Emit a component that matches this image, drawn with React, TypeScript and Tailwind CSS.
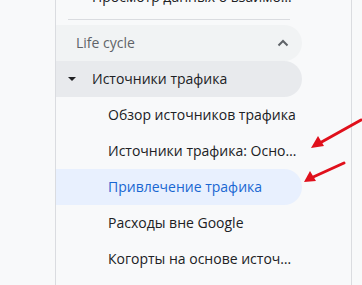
import React from 'react';

const font = { fontFamily: '"Open Sans", "Noto Sans", sans-serif' };

interface NavItemProps {
  label: string;
  active?: boolean;
}

const NavItem: React.FC<NavItemProps> = ({ label, active }) => (
  <div
    className={`flex items-center h-9 w-[246px] rounded-r-full pl-[52px] text-sm whitespace-nowrap ${
      active ? 'bg-[#e8f0fe] text-[#1967d2]' : 'text-[#202124]'
    }`}
  >
    {label}
  </div>
);

const items = [
  { label: 'Обзор источников трафика' },
  { label: 'Источники трафика: Осно…' },
  { label: 'Привлечение трафика', active: true },
  { label: 'Расходы вне Google' },
  { label: 'Когорты на основе источ…' },
];

export default function App() {
  return (
    <div className="relative w-[362px] h-[285px] overflow-hidden bg-[#f8f9fa] flex" style={font}>
      <div className="w-[55px] shrink-0" />
      <div className="w-[297px] shrink-0 border-l border-r border-[#dadce0] bg-[#f8f9fa] flex flex-col">
        {/* row cut off at the top */}
        <div className="flex items-center h-9 -mt-[21px] pl-[36px] text-sm text-[#202124] whitespace-nowrap">
          Просмотр данных о взаимо…
        </div>
        <div className="mt-[4px] mb-[5px] ml-3 w-[222px] h-px bg-[#dadce0]" />

        <div className="flex items-center justify-between h-9 w-[246px] rounded-r-full bg-[#f1f3f4] pl-5 pr-[13px] text-sm text-[#5f6368]">
          <span>Life cycle</span>
          <svg width="12" height="8" viewBox="0 0 12 8" fill="none">
            <path d="M1.5 6.5 L6 2 L10.5 6.5" stroke="#5f6368" strokeWidth="2" />
          </svg>
        </div>

        <div className="flex items-center h-9 w-[246px] rounded-r-full bg-[#e8eaed] pl-3 text-sm text-[#202124]">
          <svg width="8" height="4" viewBox="0 0 8 4" className="mr-4">
            <path d="M0 0 H8 L4 4 Z" fill="#202124" />
          </svg>
          <span>Источники трафика</span>
        </div>

        {items.map((it) => (
          <NavItem key={it.label} label={it.label} active={it.active} />
        ))}
      </div>
      <div className="flex-1" />

      {/* annotation arrows */}
      <svg className="absolute inset-0 pointer-events-none" width="362" height="285" viewBox="0 0 362 285">
        <g stroke="#e0101b" strokeWidth="3" strokeLinecap="round">
          <line x1="361" y1="120" x2="318" y2="144" />
          <line x1="344" y1="163" x2="311" y2="178" />
        </g>
        <path d="M311 148 L318 136 L324 146 Z" fill="#e0101b" />
        <path d="M304 182 L310 171 L316 181 Z" fill="#e0101b" />
      </svg>
    </div>
  );
}
